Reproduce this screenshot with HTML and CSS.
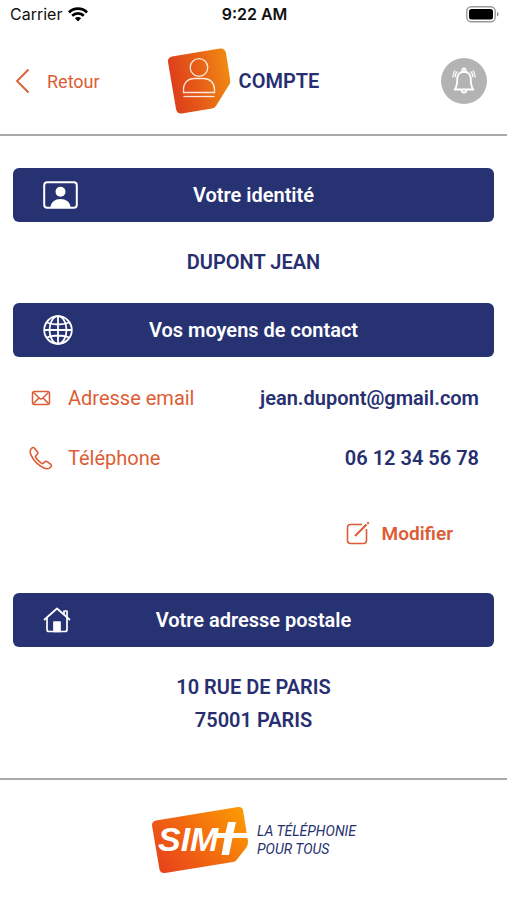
FILE: index.html
```
<!DOCTYPE html>
<html lang="fr">
<head>
    <meta charset="utf-8">
    <meta name="viewport" content="width=device-width, initial-scale=1">
    <title>Compte</title>
    <link rel="stylesheet" href="styles.css">
</head>
<body>
    <div class="status-bar">
        <div class="carrier">
            <span>Carrier</span>
            <svg width="20" height="15" viewBox="0 0 20 15" fill="none" stroke="#000" stroke-width="2.8">
                <path d="M1 5.4a12.8 12.8 0 0 1 18 0"/>
                <path d="M4.2 8.7a8.2 8.2 0 0 1 11.6 0"/>
                <path d="M10 14.4l-3.1-3.1a4.4 4.4 0 0 1 6.2 0z" fill="#000" stroke="none"/>
            </svg>
        </div>
        <div class="time">9:22 AM</div>
        <svg class="battery" width="33" height="17" viewBox="0 0 33 17">
            <rect x="0.8" y="0.8" width="28.4" height="15" rx="4.5" fill="none" stroke="#999" stroke-width="1.4"/>
            <rect x="3" y="3" width="24" height="10.6" rx="2.5" fill="#000"/>
            <path d="M31 6v4.6q1.500-.6 1.500-2.300T31 6z" fill="#888"/>
        </svg>
    </div>

    <header class="header">
        <a class="back" href="#">
            <svg width="15" height="26" viewBox="0 0 15 26" fill="none" stroke="#dc5d35" stroke-width="1.8">
                <path d="M13.5 1.5L2 13l11.500 11.500"/>
            </svg>
            Retour
        </a>
        <div class="page-title">
            <svg width="64" height="68" viewBox="0 0 64 68">
                <defs>
                    <linearGradient id="badgeFill" x1="0" y1="0.6" x2="1" y2="0.4">
                        <stop offset="0" stop-color="#dc3a1c"/>
                        <stop offset="0.5" stop-color="#e65e17"/>
                        <stop offset="1" stop-color="#f08a12"/>
                    </linearGradient>
                </defs>
                <path d="M5 9.5L53 1.5Q58 1 59 6L63.200 33Q63.500 36 62 38L49 59Q47.500 61 45 61.500L15 66.500Q10 67 9 62L1 15Q.5 10.500 5 9.500z" fill="url(#badgeFill)"/>
                <g fill="none" stroke="#fff" stroke-opacity="0.85" stroke-width="1.3">
                    <circle cx="32" cy="20.5" r="8.8"/>
                    <path d="M16.500 45.500v-3c0-6.500 4.500-11 11-11h9c6.500 0 11 4.500 11 11v3z"/>
                    <path d="M16.500 49.500h31"/>
                </g>
            </svg>
            <h1>COMPTE</h1>
        </div>
        <button class="bell" type="button" aria-label="Notifications">
            <svg width="24" height="28" viewBox="0 0 26 30" fill="none" stroke="#fff" stroke-width="2" stroke-linecap="round" stroke-linejoin="round">
                <circle cx="13" cy="3.2" r="1.8"/>
                <path d="M13 5c-4.800 0-7.300 3.400-7.300 7.600 0 6.400-.6 9-2.900 11.600h20.400c-2.300-2.600-2.900-5.200-2.900-11.600C20.300 8.400 17.800 5 13 5z"/>
                <path d="M10.400 25c.3 3.400 4.900 3.400 5.200 0"/>
                <path d="M5.600 5Q3.600 7 3.200 10.500M3.200 4Q1.200 6.500 .9 10.500M20.400 5q2 2 2.400 5.500M22.800 4q2 2.500 2.300 6.500" stroke-width="1.300"/>
            </svg>
        </button>
    </header>

    <main class="content">
        <section>
            <h2 class="section-title">
                <svg width="35" height="28" viewBox="0 0 35 28">
                    <rect x="1.2" y="1.2" width="32.6" height="25.6" rx="3" fill="none" stroke="#fff" stroke-width="2"/>
                    <circle cx="17.5" cy="10.8" r="5" fill="#fff"/>
                    <path d="M7.500 26c.5-5 4.500-8 10-8s9.500 3 10 8z" fill="#fff"/>
                </svg>
                <span>Votre identité</span>
            </h2>
            <p class="name">DUPONT JEAN</p>
        </section>

        <section>
            <h2 class="section-title">
                <svg width="30" height="30" viewBox="0 0 30 30" fill="none" stroke="#fff" stroke-width="1.8">
                    <circle cx="15" cy="15" r="13.8"/>
                    <ellipse cx="15" cy="15" rx="8.500" ry="13.8"/>
                    <path d="M15 1.200v27.600M1.200 15h27.600M3.500 7.500q11.500 4 23 0M3.500 22.500q11.500-4 23 0"/>
                </svg>
                <span>Vos moyens de contact</span>
            </h2>
            <dl class="contacts">
                <div class="contact">
                    <dt>
                        <svg width="24" height="24" viewBox="0 0 24 24" fill="none" stroke="#dc5d35" stroke-width="1.5" stroke-linejoin="round">
                            <rect x="3.500" y="5.500" width="17" height="13" rx="2"/>
                            <path d="M4.500 6.500l6 5.700q1.500 1.300 3 0l6-5.700M4.500 17.500l5.300-5.400M19.500 17.500l-5.300-5.400"/>
                        </svg>
                        Adresse email
                    </dt>
                    <dd>jean.dupont@gmail.com</dd>
                </div>
                <div class="contact">
                    <dt>
                        <svg width="24" height="24" viewBox="0 0 24 24" fill="none" stroke="#dc5d35" stroke-width="1.6" stroke-linejoin="round">
                            <path d="M2.600 2.300C1 3.900.8 6.600 2.200 9.400c2.600 5.400 6.800 9.700 12.300 12.300 2.800 1.400 5.500 1.200 7.100-.4 1.200-1.200 1.100-2-.1-3.100l-3-2.300c-1.200-.9-2-.8-2.900.1l-1.200 1.200c-.6.6-1.300.5-2 0-2-1.400-4.100-3.500-5.500-5.500-.5-.7-.6-1.400 0-2l1.200-1.200c.9-.9 1-1.700.1-2.900l-2.500-3.200c-1-1.200-1.900-1.300-3.100-.1z"/>
                        </svg>
                        Téléphone
                    </dt>
                    <dd>06 12 34 56 78</dd>
                </div>
            </dl>
            <div class="actions">
                <button class="edit" type="button">
                    <svg width="24" height="24" viewBox="0 0 24 24" fill="none" stroke="#dc5d35" stroke-width="1.6">
                        <path d="M16 3.500H4.500q-3 0-3 3v13q0 3 3 3h13q3 0 3-3V8"/>
                        <path d="M9 15L20.500 3.500M21.300 2.700l1.400-1.400" stroke-width="2"/>
                    </svg>
                    Modifier
                </button>
            </div>
        </section>

        <section>
            <h2 class="section-title">
                <svg width="28" height="26" viewBox="0 0 28 26" fill="none" stroke="#fff" stroke-width="1.7" stroke-linejoin="round">
                    <path d="M1 13L14 1.500 27 13"/>
                    <path d="M4 11v11.500q0 2 2 2h16q2 0 2-2V11M21 7V4h3v6"/>
                    <path d="M11 15h6v9.500h-6z" fill="#fff"/>
                </svg>
                <span>Votre adresse postale</span>
            </h2>
            <address class="address">
                10 RUE DE PARIS<br>
                75001 PARIS
            </address>
        </section>
    </main>

    <footer class="footer">
        <svg width="98" height="68" viewBox="0 0 98 68" role="img" aria-label="SIM+">
            <defs>
                <linearGradient id="logoFill" x1="0" y1="0.8" x2="1" y2="0.2">
                    <stop offset="0" stop-color="#e8431b"/>
                    <stop offset="0.5" stop-color="#f26a10"/>
                    <stop offset="1" stop-color="#fb9803"/>
                </linearGradient>
            </defs>
            <path d="M5 14.500L87 1Q91 .5 92 4L97 35Q97.300 39 95 42L86 53.500Q84.500 55.500 82 56L14 67Q9.500 67.500 8.500 63.500L1 19.500Q.7 15.500 5 14.500z" fill="url(#logoFill)"/>
            <text class="logo-text" x="7" y="45">SIM</text>
            <path d="M65 27h9.500L77 16h8l-2.500 11H98v5H81.500L78 49h-7.500L73.500 32H64z" fill="#fff"/>
        </svg>
        <p class="tagline">LA TÉLÉPHONIE<br>POUR TOUS</p>
    </footer>
</body>
</html>
```
FILE: styles.css
```
* {
    box-sizing: border-box;
}
body {
    margin: 0;
    min-height: 100vh;
    display: flex;
    flex-direction: column;
    background: #fff;
    color: #272f70;
    font-family: Roboto, "Liberation Sans", sans-serif;
}
h1, h2, p, dl, dd {
    margin: 0;
}
svg {
    display: block;
    flex-shrink: 0;
}
button {
    padding: 0;
    border: none;
    background: none;
    font-family: inherit;
    cursor: pointer;
}
.status-bar {
    display: grid;
    grid-template-columns: 1fr auto 1fr;
    align-items: center;
    height: 28px;
    padding: 0 8px 0 10px;
    color: #111;
    font-family: Inter, sans-serif;
    font-size: 16px;
}
.carrier {
    display: flex;
    align-items: center;
    gap: 6px;
}
.time {
    font-weight: 600;
}
.battery {
    justify-self: end;
}
.header {
    display: grid;
    grid-template-columns: 1fr auto 1fr;
    align-items: center;
    height: 108px;
    padding: 0 20px 0 15px;
    border-bottom: 2px solid #aaa;
}
.back {
    display: flex;
    align-items: center;
    gap: 17px;
    color: #dc5d35;
    font-size: 18px;
    text-decoration: none;
}
.page-title {
    display: flex;
    align-items: center;
    gap: 8px;
    padding-right: 16px;
}
.page-title h1 {
    font-size: 20px;
    font-weight: 600;
}
.bell {
    justify-self: end;
    display: flex;
    align-items: center;
    justify-content: center;
    width: 46px;
    height: 46px;
    border-radius: 50%;
    background: #b3b3b3;
}
.content {
    padding: 32px 13px 0;
}
.section-title {
    display: grid;
    grid-template-columns: 1fr auto 1fr;
    align-items: center;
    height: 54px;
    padding: 0 30px;
    border-radius: 6px;
    background: #273273;
    color: #fff;
    font-size: 20px;
    font-weight: 600;
}
.name {
    line-height: 81px;
    text-align: center;
    font-size: 20px;
    font-weight: 600;
}
.contacts {
    padding: 11px 15px 0 16px;
}
.contact {
    display: flex;
    align-items: center;
    justify-content: space-between;
    height: 60px;
    font-size: 20px;
}
.contact dt {
    display: flex;
    align-items: center;
    gap: 15px;
    color: #dc5d35;
}
.contact dd {
    font-weight: 600;
}
.actions {
    display: flex;
    justify-content: flex-end;
    padding: 30px 41px 45px;
}
.edit {
    display: flex;
    align-items: center;
    gap: 12px;
    height: 30px;
    color: #dc5d35;
    font-size: 19px;
    font-weight: 600;
}
.address {
    padding: 24px 0 41px;
    text-align: center;
    font-size: 20px;
    font-style: normal;
    font-weight: 600;
    line-height: 33px;
}
.footer {
    display: flex;
    flex: 1;
    align-items: center;
    justify-content: center;
    gap: 8px;
    border-top: 2px solid #aaa;
}
.logo-text {
    fill: #fff;
    font-family: "Liberation Sans", sans-serif;
    font-size: 34px;
    font-style: italic;
    font-weight: 700;
}
.tagline {
    font-size: 14px;
    font-style: italic;
    line-height: 18px;
}
```
